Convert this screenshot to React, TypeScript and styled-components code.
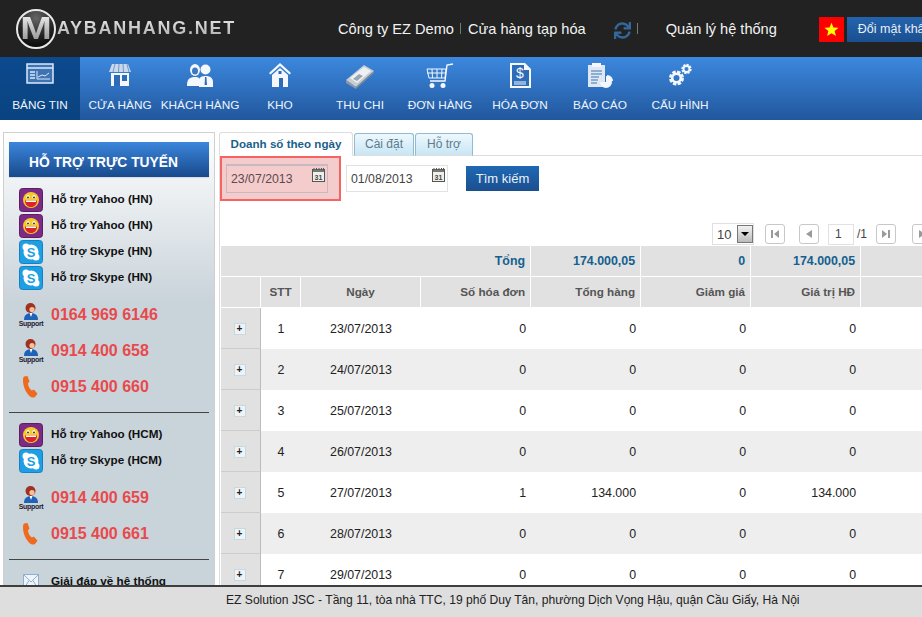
import React from 'react';
import styled, { createGlobalStyle } from 'styled-components';
import { FaSync } from 'react-icons/fa';

const GlobalStyle = createGlobalStyle`
  html, body { margin: 0; padding: 0; height: 100%; overflow: hidden; background: #fff; }
  body { font-family: "Liberation Sans", Arial, sans-serif; font-size: 12px; color: #222; }
  #root { height: 100%; }
`;

const Page = styled.div`
  display: flex;
  flex-direction: column;
  height: 617px;
  overflow: hidden;
`;

const Header = styled.header`
  display: flex;
  align-items: center;
  height: 57px;
  flex: none;
  background: #222;
  white-space: nowrap;
  padding-left: 16px;
  overflow: hidden;
`;

const Logo = styled.div`
  display: flex;
  align-items: center;
  width: 322px;
  flex: none;
`;

const LogoMark = styled.div`
  width: 40px;
  height: 40px;
  flex: none;
  box-sizing: border-box;
  border: 2px solid #e8e8e8;
  border-radius: 50%;
  background: radial-gradient(circle at 50% 20%, #666 0%, #222 55%, #000 100%);
  display: flex;
  align-items: center;
  justify-content: center;
  overflow: hidden;
`;

const LogoLetter = styled.span`
  font: bold 31px/1 "Liberation Sans", sans-serif;
  transform: scaleX(1.22);
  background: linear-gradient(#f4f4f4, #8c8c8c);
  -webkit-background-clip: text;
  background-clip: text;
  color: transparent;
`;

const LogoText = styled.span`
  font: bold 18px/1.2 "Liberation Sans", sans-serif;
  letter-spacing: 1.75px;
  margin-left: 1px;
  background: linear-gradient(#e8e8e8, #a8a8a8);
  -webkit-background-clip: text;
  background-clip: text;
  color: transparent;
`;

const HeaderText = styled.span<{ $left?: number }>`
  color: #f2f2f2;
  font-size: 14.6px;
  margin-left: ${(p) => p.$left ?? 0}px;
`;

const HeaderSep = styled.span<{ $left: number }>`
  width: 1px;
  height: 11px;
  flex: none;
  background: #6f7f6f;
  margin-left: ${(p) => p.$left}px;
`;

const RefreshIcon = styled(FaSync)`
  flex: none;
  width: 17px;
  height: 17px;
  margin-left: 28px;
  margin-top: 3px;
  color: #34689a;
`;

const Flag = styled.div`
  width: 25px;
  height: 25px;
  flex: none;
  background: #f00;
  margin-left: 42px;
  margin-top: 2px;
  display: flex;
  align-items: center;
  justify-content: center;
`;

const PasswordButton = styled.div`
  height: 25px;
  margin-left: 3px;
  margin-top: 2px;
  padding: 0 11px;
  flex: none;
  background: linear-gradient(#2464ac, #1a4f90);
  color: #e8eef8;
  font-size: 12.5px;
  line-height: 25px;
`;

const Nav = styled.nav`
  display: flex;
  height: 63px;
  flex: none;
  background: linear-gradient(#3c88de, #21579d);
`;

const NavItem = styled.div<{ $active?: boolean }>`
  width: 80px;
  flex: none;
  display: flex;
  flex-direction: column;
  align-items: center;
  padding-top: 6px;
  box-sizing: border-box;
  color: #eef4fb;
  font-size: 11.8px;
  white-space: nowrap;
  background: ${(p) => (p.$active ? 'linear-gradient(#0c4a8e, #0a4380)' : 'none')};
`;

const NavIcon = styled.div`
  height: 30px;
  margin-bottom: 5px;
  svg { display: block; }
`;

const Body = styled.div`
  display: flex;
  flex: 1;
  min-height: 0;
  overflow: hidden;
`;

const Sidebar = styled.aside`
  width: 212px;
  flex: none;
  box-sizing: border-box;
  margin: 12px 0 0 3px;
  padding: 9px 5px 0;
  border: 1px solid #d0d0d0;
  border-bottom: none;
  background: linear-gradient(#fff 0, #c9d3da 170px);
  overflow: hidden;
`;

const SideTitle = styled.h2`
  margin: 0 0 10px;
  height: 35px;
  background: linear-gradient(#3c86dc, #184a8c);
  color: #fff;
  font: bold 13.8px/41px "Liberation Sans", sans-serif;
  padding-left: 20px;
  box-shadow: 0 1px 1px #d8dee2;
`;

const SideGroup = styled.div`
  display: flex;
  flex-direction: column;
  padding-left: 10px;
`;

const ChatRow = styled.div`
  display: flex;
  align-items: center;
  height: 26px;
  gap: 8px;
  color: #111;
  font-weight: bold;
  font-size: 11.7px;
  white-space: nowrap;
`;

const ChatLabel = styled.span`
  margin-top: -3px;
`;

const PhoneRow = styled.div<{ $first?: boolean }>`
  display: flex;
  align-items: center;
  height: 36px;
  gap: 8px;
  margin-top: ${(p) => (p.$first ? 6 : 0)}px;
  color: #e8494b;
  font-weight: bold;
  font-size: 16px;
`;

const Divider = styled.hr`
  border: none;
  height: 1px;
  background: #444;
  margin: 7px 0 9px;
`;

const SupportBox = styled.div`
  width: 24px;
  height: 24px;
  flex: none;
  display: flex;
  flex-direction: column;
  align-items: center;
  color: #223;
  font: bold 7px/7px "Liberation Sans", sans-serif;
  letter-spacing: -0.3px;
`;

const Main = styled.main`
  flex: 1;
  min-width: 0;
  margin: 12px 0 0 4px;
  overflow: hidden;
`;

const Tabs = styled.div`
  display: flex;
  align-items: flex-end;
  height: 24px;
  box-sizing: border-box;
  border-bottom: 1px solid #ddd;
`;

const Tab = styled.div<{ $active?: boolean; $w: number }>`
  width: ${(p) => p.$w}px;
  box-sizing: border-box;
  text-align: center;
  font-size: ${(p) => (p.$active ? 11.6 : 12)}px;
  margin-left: ${(p) => (p.$active ? 0 : 1)}px;
  margin-bottom: -1px;
  border: 1px solid ${(p) => (p.$active ? '#ddd' : '#8fbcd0')};
  border-bottom: ${(p) => (p.$active ? '1px solid #fff' : '1px solid #ddd')};
  border-radius: 3px 3px 0 0;
  height: ${(p) => (p.$active ? 24 : 23)}px;
  line-height: ${(p) => (p.$active ? 22 : 21)}px;
  font-weight: ${(p) => (p.$active ? 'bold' : 'normal')};
  color: ${(p) => (p.$active ? '#1a5f8c' : '#5c7c8c')};
  background: ${(p) => (p.$active ? '#fff' : 'linear-gradient(#eef8fd, #c8e6f4)')};
`;

const Panel = styled.div`
  border-left: 1px solid #ddd;
  padding-left: 1px;
  height: 500px;
`;

const FilterRow = styled.div`
  display: flex;
  align-items: center;
  height: 44px;
`;

const Highlight = styled.div`
  display: flex;
  align-items: center;
  box-sizing: border-box;
  width: 121px;
  height: 45px;
  margin-left: -1px;
  padding-left: 4px;
  background: #f5cccc;
  border: 2px solid #f76262;
`;

const DateField = styled.div<{ $tinted?: boolean }>`
  position: relative;
  width: 102px;
  height: ${(p) => (p.$tinted ? 29 : 27)}px;
  box-sizing: border-box;
  border: 1px solid ${(p) => (p.$tinted ? '#c9b8c2' : '#e2e2e2')};
  border-top-width: ${(p) => (p.$tinted ? 2 : 1)}px;
  margin-left: ${(p) => (p.$tinted ? 0 : 5)}px;
  padding: 6px 0 0 4px;
  color: ${(p) => (p.$tinted ? '#5e4a4e' : '#444')};
  font-size: 12.3px;
  background: ${(p) => (p.$tinted ? '#f5cccc' : '#fff')};
`;

const CalendarSlot = styled.div`
  position: absolute;
  right: 2px;
  top: 1px;
`;

const SearchButton = styled.div`
  width: 73px;
  height: 25px;
  margin-left: 18px;
  background: linear-gradient(#1f68b4, #1b4f8f);
  color: #eaf2fa;
  font-size: 13px;
  line-height: 25px;
  text-align: center;
`;

const Pager = styled.div`
  display: flex;
  align-items: center;
  height: 46px;
  padding: 22px 0 0 491px;
  box-sizing: border-box;
  color: #444;
  width: 720px;
`;

const PageSize = styled.div`
  display: flex;
  align-items: center;
  justify-content: space-between;
  box-sizing: border-box;
  width: 42px;
  height: 22px;
  border: 1px solid #e0e0e0;
  padding: 1px 0 1px 4px;
  font-size: 13px;
  flex: none;
`;

const SelectArrow = styled.span`
  width: 16px;
  height: 18px;
  background: linear-gradient(#f2f2f2, #bbb);
  border: 1px solid #777;
  box-sizing: border-box;
  display: flex;
  align-items: center;
  justify-content: center;
  &::after {
    content: '';
    border: 4px solid transparent;
    border-top: 4px solid #000;
    border-bottom: none;
  }
`;

const PagerButton = styled.div<{ $left: number }>`
  width: 20px;
  height: 20px;
  flex: none;
  margin-left: ${(p) => p.$left}px;
  box-sizing: border-box;
  border: 1px solid #c8c8c8;
  border-radius: 3px;
  background: #fff;
  display: flex;
  align-items: center;
  justify-content: center;
`;

const PageInput = styled.div`
  width: 26px;
  height: 21px;
  flex: none;
  margin-left: 9px;
  box-sizing: border-box;
  border: 1px solid #e2e2e2;
  padding-left: 6px;
  line-height: 19px;
  font-size: 12px;
`;

const PageTotal = styled.span`
  margin-left: 3px;
  font-size: 12px;
  width: 9px;
`;

const DataTable = styled.table`
  table-layout: fixed;
  border-collapse: separate;
  border-spacing: 0;
  width: 750px;
  font-size: 12.4px;
`;

const Col = styled.col<{ $w: number }>`
  width: ${(p) => p.$w}px;
`;

const HeadCell = styled.th<{ $center?: boolean; $total?: boolean }>`
  height: 31px;
  padding: 0 5px 1px;
  box-sizing: border-box;
  background: #e1e1e1;
  border-right: 1px solid #fff;
  border-bottom: 1px solid #fff;
  text-align: ${(p) => (p.$center ? 'center' : 'right')};
  color: ${(p) => (p.$total ? '#14608f' : '#555')};
  font-size: ${(p) => (p.$total ? 12.4 : 11.7)}px;
  font-weight: bold;
`;

const Row = styled.tr<{ $even: boolean }>`
  background: ${(p) => (p.$even ? '#eee' : '#fff')};
`;

const ExpandCell = styled.td`
  height: 41px;
  box-sizing: border-box;
  padding: 0 2px 0 0;
  background: #e1e1e1;
  border-right: 1px solid #bbb;
  border-bottom: 1px solid #ccc;
  text-align: center;
`;

const Cell = styled.td<{ $center?: boolean }>`
  padding: 0 5px;
  height: 41px;
  box-sizing: border-box;
  color: #222;
  text-align: ${(p) => (p.$center ? 'center' : 'right')};
`;

const ExpandBox = styled.span`
  display: inline-block;
  width: 12px;
  height: 12px;
  box-sizing: border-box;
  border: 1px solid #c8d8e0;
  background: #eef3f6;
  color: #222;
  font: bold 10px/10px "Liberation Sans", sans-serif;
  text-align: center;
`;

const Footer = styled.footer`
  height: 32px;
  flex: none;
  box-sizing: border-box;
  border-top: 2px solid #3e3e3e;
  background: #dedede;
  color: #222;
  font-size: 12.1px;
  line-height: 27px;
  padding-left: 226px;
  white-space: nowrap;
`;

const WHITE = '#f4f8fc';

const DashIcon = () => (
  <svg width="28" height="22" viewBox="0 0 28 22" fill="none" stroke="#dbe8f6">
    <rect x="1" y="1" width="26" height="19" fill="#3f74b4" strokeWidth="1.5" />
    <path d="M1 5h26" strokeWidth="1.5" />
    <path d="M4 9h5M4 12h5M4 15h5" strokeWidth="1.5" />
    <path d="M11 8v8h13M12 14l4-2 3 1 4-3" />
  </svg>
);
const ShopIcon = () => (
  <svg width="24" height="24" viewBox="0 0 24 24" fill={WHITE}>
    <path d="M4 1h16l3 8H1z" fill="#c9d8ea" />
    <path d="M7 1 5 9M11 1l-.5 8M15 1l.5 8M19 1l2 8" stroke="#6f98c8" fill="none" />
    <path d="M3 10h18v13H3z" />
    <path d="M6 12h6v11H6z" fill="#2f6cb8" />
    <path d="M14 12h5v6h-5z" fill="#2f6cb8" />
  </svg>
);
const UsersIcon = () => (
  <svg width="26" height="24" viewBox="0 0 26 24" fill={WHITE}>
    <ellipse cx="8" cy="7" rx="5" ry="6" />
    <ellipse cx="8" cy="8" rx="3" ry="3.500" fill="#3f78be" />
    <path d="M0 22c0-6 3-8 8-8 2 0 3 .4 4 1v8H0z" />
    <circle cx="18.5" cy="6.5" r="5" />
    <path d="M12 24v-8c1-2 3-3 6-3h1c4 0 7 2 7 6v5z" />
    <path d="M18 14h1.4l.6 8h-2.4z" fill="#2f6cb8" />
  </svg>
);
const HomeIcon = () => (
  <svg width="22" height="24" viewBox="0 0 22 24" fill={WHITE}>
    <path d="M11 0 22 10l-1.5 1.5L11 3 1.500 11.500 0 10z" />
    <path d="M3 12 11 5l8 7v12H3z" />
    <path d="M10 15h4v9h-4z" fill="#2f6cb8" />
    <path d="M9.500 8h3v3h-3z" fill="#2f6cb8" />
  </svg>
);
const MoneyIcon = () => (
  <svg width="30" height="26" viewBox="0 0 30 26">
    <path d="M1 17 19 2l10 6-18 16z" fill="#c6cdd4" />
    <path d="M5 15 19 4l7 4-14 12z" fill="#eef1f4" />
    <path d="M1 17v3l10 6v-2z" fill="#8d99a6" />
    <path d="M11 24v2l18-16V8z" fill="#7e8b98" />
    <path d="M8 16l6-5 4 2-6 5z" fill="#9aa7b2" />
  </svg>
);
const CartIcon = () => (
  <svg width="28" height="26" viewBox="0 0 28 26" fill="none" stroke={WHITE}>
    <path d="M27 1 21 2l-2 16H4" strokeWidth="1.4" />
    <path d="M1 6h19l-1 9H3zM1 10h19M6 6l.5 9M11 6v9M16 6l-.5 9" />
    <circle cx="6" cy="22.500" r="2.500" fill={WHITE} stroke="none" />
    <circle cx="17" cy="22.500" r="2.500" fill={WHITE} stroke="none" />
  </svg>
);
const InvoiceIcon = () => (
  <svg width="22" height="25" viewBox="0 0 22 25">
    <path d="M1 0h15l6 6v19H1z" fill={WHITE} />
    <path d="M3 2h12v5h5v16H3z" fill="#2f6cb8" />
    <text x="11" y="15" textAnchor="middle" fill={WHITE} fontSize="14" fontFamily="Liberation Sans">$</text>
    <path d="M5 19h12M5 21h12" stroke={WHITE} />
  </svg>
);
const ReportIcon = () => (
  <svg width="27" height="26" viewBox="0 0 27 26">
    <path d="M1 2h17v22H1z" fill="#dfe8f2" />
    <path d="M5 0h9v4H5z" fill={WHITE} />
    <path d="M4 8h11M4 11h11M4 14h8M4 17h7M4 20h6" stroke="#3f74b4" />
    <path d="M19 13a6 6 0 1 1-6 6h6z" fill={WHITE} />
    <path d="M20 12a6 6 0 0 1 6 6h-6z" fill={WHITE} />
  </svg>
);
const GearsIcon = () => (
  <svg width="24" height="24" viewBox="0 0 24 24" fill="none" stroke={WHITE}>
    <circle cx="8.500" cy="15" r="5.500" strokeWidth="4" strokeDasharray="3 1.300" />
    <circle cx="8.500" cy="15" r="4.300" strokeWidth="2.500" />
    <circle cx="18.500" cy="6" r="3.800" strokeWidth="2.800" strokeDasharray="2 .9" />
    <circle cx="18.500" cy="6" r="3" strokeWidth="1.800" />
  </svg>
);

const navItems = [
  { label: 'BẢNG TIN', icon: <DashIcon />, active: true },
  { label: 'CỬA HÀNG', icon: <ShopIcon /> },
  { label: 'KHÁCH HÀNG', icon: <UsersIcon /> },
  { label: 'KHO', icon: <HomeIcon /> },
  { label: 'THU CHI', icon: <MoneyIcon /> },
  { label: 'ĐƠN HÀNG', icon: <CartIcon /> },
  { label: 'HÓA ĐƠN', icon: <InvoiceIcon /> },
  { label: 'BÁO CÁO', icon: <ReportIcon /> },
  { label: 'CẤU HÌNH', icon: <GearsIcon /> },
];

const YahooIcon = () => (
  <svg width="24" height="24" viewBox="0 0 24 24" style={{ flex: 'none' }}>
    <rect x=".5" y=".5" width="23" height="23" rx="3" fill="#7c2a84" stroke="#5d1c66" />
    <circle cx="12" cy="12" r="8" fill="#f7c927" />
    <ellipse cx="9" cy="9" rx="1.600" ry="2" fill="#fff" />
    <ellipse cx="15" cy="9" rx="1.600" ry="2" fill="#fff" />
    <circle cx="9" cy="9.500" r=".9" fill="#222" />
    <circle cx="15" cy="9.500" r=".9" fill="#222" />
    <path d="M6 12.500h12c0 4-2.500 6.500-6 6.500s-6-2.500-6-6.500z" fill="#d8242a" />
    <path d="M7 12.500h10v1.500H7z" fill="#fff" />
  </svg>
);

const SkypeIcon = () => (
  <svg width="24" height="24" viewBox="0 0 24 24" style={{ flex: 'none' }}>
    <rect x=".5" y=".5" width="23" height="23" rx="3" fill="#1c9fe4" stroke="#1680c0" />
    <circle cx="12" cy="12" r="7.500" fill="#fff" />
    <circle cx="7" cy="7" r="3.500" fill="#fff" />
    <circle cx="17" cy="17" r="3.500" fill="#fff" />
    <text x="12" y="16.500" textAnchor="middle" fontSize="13" fontWeight="bold" fill="#1c9fe4" fontFamily="Liberation Sans">S</text>
  </svg>
);

const SupportIcon = () => (
  <SupportBox>
    <svg width="16" height="17" viewBox="0 0 16 17" style={{ flex: 'none' }}>
      <circle cx="7.500" cy="5" r="5" fill="#a0301f" />
      <circle cx="9" cy="6.500" r="2.600" fill="#f2c29c" />
      <path d="M1 17c0-5 3-7 7-7s7 2 7 7z" fill="#1f63b8" />
      <path d="M6.500 10h3L8 14z" fill="#fff" />
    </svg>
    <span>Support</span>
  </SupportBox>
);

const PhoneIcon = () => (
  <svg width="24" height="24" viewBox="0 0 24 24" style={{ flex: 'none' }}>
    <path
      d="M5 1.500 8.500 1l2 5.500-1.600 2c.6 3 1.800 5.800 4 7l2-1 3.600 4.200-2.500 3.200c-1.500.8-3.500.8-5-.5C7 18 4 11.500 4 5.500c0-1.600.2-3 1-4z"
      fill="#ee6a1f"
    />
  </svg>
);

const MailIcon = () => (
  <svg width="24" height="16" viewBox="0 0 24 16" style={{ flex: 'none' }}>
    <rect x="4.500" y=".5" width="15" height="15" fill="#eef4fa" stroke="#8fb0d0" />
    <path d="M4.500 .5 12 8l7.500-7.500M4.500 15.500 10 6.500M19.500 15.500 14 6.500" fill="none" stroke="#8fb0d0" />
  </svg>
);

const CalendarIcon = () => (
  <svg width="13" height="15" viewBox="0 0 13 15">
    <rect x=".5" y="2.500" width="12" height="12" fill="#f0f0ea" stroke="#555" />
    <path d="M1 2.500h11v2.500H1z" fill="#777" />
    <path d="M2 1v2M4.500 1v2M7 1v2M9.500 1v2M11.500 1v2" stroke="#555" />
    <text x="6.500" y="12.500" textAnchor="middle" fontSize="7" fontWeight="bold" fill="#444" fontFamily="Liberation Sans">31</text>
  </svg>
);

const PagerGlyph = ({ d }: { d: string }) => (
  <svg width="12" height="12" viewBox="0 0 12 12">
    <path d={d} fill="#9a9a9a" />
  </svg>
);

const dates = ['23/07/2013', '24/07/2013', '25/07/2013', '26/07/2013', '27/07/2013', '28/07/2013', '29/07/2013'];

export default function App() {
  return (
    <Page>
      <GlobalStyle />
      <Header>
        <Logo>
          <LogoMark><LogoLetter>M</LogoLetter></LogoMark>
          <LogoText>AYBANHANG.NET</LogoText>
        </Logo>
        <HeaderText>Công ty EZ Demo</HeaderText>
        <HeaderSep $left={6} />
        <HeaderText $left={7}>Cửa hàng tạp hóa</HeaderText>
        <RefreshIcon />
        <HeaderSep $left={6} />
        <HeaderText $left={28}>Quản lý hệ thống</HeaderText>
        <Flag>
          <svg width="15" height="15" viewBox="0 0 20 20">
            <path d="M10 1l2.600 6.200 6.800.5-5.200 4.300 1.700 6.600L10 15l-5.900 3.600 1.700-6.600L.6 7.700l6.800-.5z" fill="#ff0" />
          </svg>
        </Flag>
        <PasswordButton>Đổi mật khẩu</PasswordButton>
      </Header>
      <Nav>
        {navItems.map((n) => (
          <NavItem key={n.label} $active={n.active}>
            <NavIcon>{n.icon}</NavIcon>
            {n.label}
          </NavItem>
        ))}
      </Nav>
      <Body>
        <Sidebar>
          <SideTitle>HỖ TRỢ TRỰC TUYẾN</SideTitle>
          <SideGroup>
            <ChatRow><YahooIcon /><ChatLabel>Hỗ trợ Yahoo (HN)</ChatLabel></ChatRow>
            <ChatRow><YahooIcon /><ChatLabel>Hỗ trợ Yahoo (HN)</ChatLabel></ChatRow>
            <ChatRow><SkypeIcon /><ChatLabel>Hỗ trợ Skype (HN)</ChatLabel></ChatRow>
            <ChatRow><SkypeIcon /><ChatLabel>Hỗ trợ Skype (HN)</ChatLabel></ChatRow>
            <PhoneRow $first><SupportIcon />0164 969 6146</PhoneRow>
            <PhoneRow><SupportIcon />0914 400 658</PhoneRow>
            <PhoneRow><PhoneIcon />0915 400 660</PhoneRow>
          </SideGroup>
          <Divider />
          <SideGroup>
            <ChatRow><YahooIcon /><ChatLabel>Hỗ trợ Yahoo (HCM)</ChatLabel></ChatRow>
            <ChatRow><SkypeIcon /><ChatLabel>Hỗ trợ Skype (HCM)</ChatLabel></ChatRow>
            <PhoneRow $first><SupportIcon />0914 400 659</PhoneRow>
            <PhoneRow><PhoneIcon />0915 400 661</PhoneRow>
          </SideGroup>
          <Divider />
          <SideGroup>
            <ChatRow><MailIcon /><ChatLabel>Giải đáp về hệ thống</ChatLabel></ChatRow>
          </SideGroup>
        </Sidebar>
        <Main>
          <Tabs>
            <Tab $active $w={134}>Doanh số theo ngày</Tab>
            <Tab $w={60}>Cài đặt</Tab>
            <Tab $w={58}>Hỗ trợ</Tab>
          </Tabs>
          <Panel>
            <FilterRow>
              <Highlight>
                <DateField $tinted>
                  23/07/2013
                  <CalendarSlot><CalendarIcon /></CalendarSlot>
                </DateField>
              </Highlight>
              <DateField>
                01/08/2013
                <CalendarSlot><CalendarIcon /></CalendarSlot>
              </DateField>
              <SearchButton>Tìm kiếm</SearchButton>
            </FilterRow>
            <Pager>
              <PageSize>10<SelectArrow /></PageSize>
              <PagerButton $left={11}><PagerGlyph d="M2 2h2v8H2zM10 2v8L5 6z" /></PagerButton>
              <PagerButton $left={14}><PagerGlyph d="M9 2v8L3 6z" /></PagerButton>
              <PageInput>1</PageInput>
              <PageTotal>/1</PageTotal>
              <PagerButton $left={10}><PagerGlyph d="M2 2v8l5-4zM8 2h2v8H8z" /></PagerButton>
              <PagerButton $left={16}><PagerGlyph d="M3 2v8l6-4z" /></PagerButton>
            </Pager>
            <DataTable>
              <colgroup>
                <Col $w={40} />
                <Col $w={40} />
                <Col $w={120} />
                <Col $w={110} />
                <Col $w={110} />
                <Col $w={110} />
                <Col $w={110} />
                <Col $w={110} />
              </colgroup>
              <thead>
                <tr>
                  <HeadCell $total colSpan={4}>Tổng</HeadCell>
                  <HeadCell $total>174.000,05</HeadCell>
                  <HeadCell $total>0</HeadCell>
                  <HeadCell $total>174.000,05</HeadCell>
                  <HeadCell />
                </tr>
                <tr>
                  <HeadCell />
                  <HeadCell $center>STT</HeadCell>
                  <HeadCell $center>Ngày</HeadCell>
                  <HeadCell>Số hóa đơn</HeadCell>
                  <HeadCell>Tổng hàng</HeadCell>
                  <HeadCell>Giảm giá</HeadCell>
                  <HeadCell>Giá trị HĐ</HeadCell>
                  <HeadCell />
                </tr>
              </thead>
              <tbody>
                {dates.map((d, i) => {
                  const total = i === 4 ? '134.000' : '0';
                  return (
                    <Row key={d} $even={i % 2 === 1}>
                      <ExpandCell><ExpandBox>+</ExpandBox></ExpandCell>
                      <Cell $center>{i + 1}</Cell>
                      <Cell $center>{d}</Cell>
                      <Cell>{i === 4 ? 1 : 0}</Cell>
                      <Cell>{total}</Cell>
                      <Cell>0</Cell>
                      <Cell>{total}</Cell>
                      <Cell />
                    </Row>
                  );
                })}
              </tbody>
            </DataTable>
          </Panel>
        </Main>
      </Body>
      <Footer>EZ Solution JSC - Tầng 11, tòa nhà TTC, 19 phố Duy Tân, phường Dịch Vọng Hậu, quận Cầu Giấy, Hà Nội</Footer>
    </Page>
  );
}
